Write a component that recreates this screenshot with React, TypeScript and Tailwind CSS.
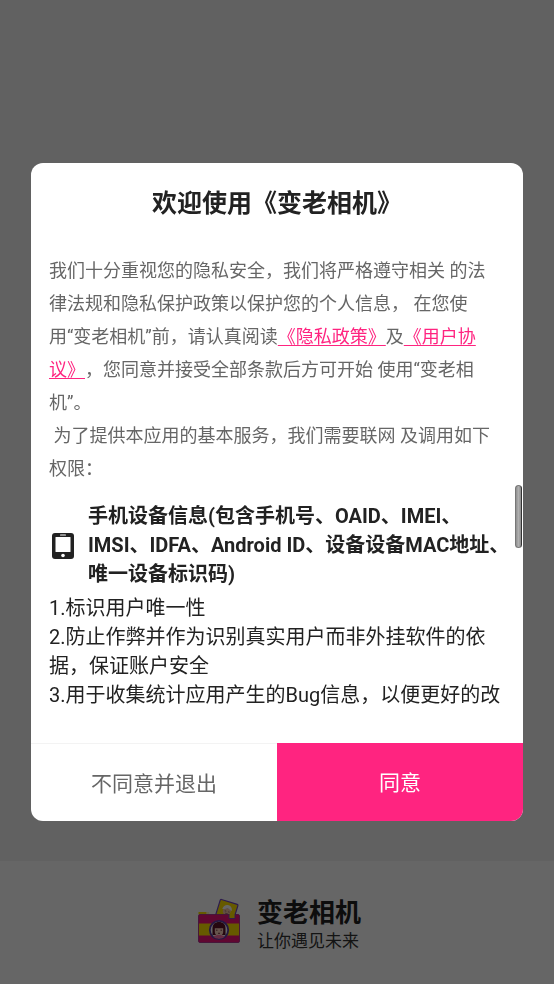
import { useState } from 'react';

const PURPOSES = [
  '1.标识用户唯一性',
  '2.防止作弊并作为识别真实用户而非外挂软件的依据，保证账户安全',
  '3.用于收集统计应用产生的Bug信息，以便更好的改',
];

function DeviceIcon() {
  return (
    <svg width="22" height="26" viewBox="0 0 22 26" className="shrink-0" aria-hidden="true">
      <rect width="22" height="26" rx="3" fill="#222" />
      <rect x="3.5" y="4" width="15" height="15" rx="0.5" fill="#fff" />
      <rect x="8" y="1.6" width="6" height="1" rx="0.5" fill="#fff" />
      <circle cx="11" cy="22.5" r="1.8" fill="#fff" />
    </svg>
  );
}

function CameraLogo() {
  return (
    <svg width="44" height="46" viewBox="0 0 44 46" className="shrink-0" aria-hidden="true">
      {/* photo coming out of the camera */}
      <g transform="rotate(17 23.5 2.2)">
        <rect x="23.5" y="2.2" width="18.5" height="22" rx="1" fill="#ffe100" stroke="#6f45c4" strokeWidth="1.2" />
        <circle cx="33" cy="11.5" r="4" fill="#f6c6a8" />
        <path d="M28 11c0-4 2.500-5.500 5-5.500s4.700 2 4.700 4.800c-2-.3-3-1.600-4.700-1.800-1.500 1-3 2.300-5 2.500z" fill="#fff" />
        <path d="M31 12h1.500M34.500 12H36M32 14.200h3" stroke="#99606a" strokeWidth="0.8" />
        <path d="M28.500 18c2-3.200 7-3.200 9 0z" fill="#f4ecff" />
      </g>
      {/* flash */}
      <rect x="1.500" y="15" width="8" height="2.500" fill="#ffe100" />
      <rect x="10" y="15" width="2.200" height="2.500" fill="#fff7b8" />
      {/* body */}
      <rect x="1.500" y="17.500" width="41" height="28" rx="1.500" fill="#f0137b" />
      <rect x="1.500" y="26.500" width="41" height="12" fill="#ffe100" />
      <rect x="1.500" y="17.500" width="41" height="28" rx="1.500" fill="none" stroke="#a8308f" strokeWidth="0.9" />
      <path d="M32 17v4.500h6V17z" fill="#ffe100" />
      <path d="M32 17v4.500h6V17" fill="none" stroke="#6f45c4" strokeWidth="0.9" />
      {/* lens */}
      <circle cx="22" cy="33" r="9.200" fill="#fff" stroke="#5a3ca8" strokeWidth="1.800" />
      <path d="M15.500 38v-6.500c0-4.500 2.800-6.500 6.500-6.500s6.500 2 6.500 6.500V38z" fill="#5c1226" />
      <path d="M17.800 31.200h8.400V35a4.200 4.200 0 0 1-8.400 0z" fill="#ffd2bd" />
      <path d="M19 33.200h1.500M23.500 33.200H25M21 36.300h2" stroke="#5c1226" strokeWidth="0.800" />
      <path d="M16 39.800c2.500-2.300 9.500-2.300 12 0-3 2.600-9 2.600-12 0z" fill="#ff6fa5" />
    </svg>
  );
}

function SplashPage() {
  return (
    <div className="min-h-screen flex flex-col bg-[#f3f3f3]">
      <div className="flex-1" />
      <footer className="flex items-start justify-center gap-4 bg-white pl-1 pt-9 pb-[31px]">
        <CameraLogo />
        <div>
          <h1 className="text-[26px] leading-8 font-bold text-[#222]">变老相机</h1>
          <p className="text-[17px] leading-6 text-[#333]">让你遇见未来</p>
        </div>
      </footer>
    </div>
  );
}

interface ConsentDialogProps {
  onAgree: () => void;
  onDecline: () => void;
}

function ConsentDialog({ onAgree, onDecline }: ConsentDialogProps) {
  return (
    <div className="fixed inset-0 bg-black/60 flex items-center justify-center px-[31px]">
      <div
        role="dialog"
        aria-modal="true"
        aria-labelledby="consent-title"
        className="relative w-full bg-white rounded-xl overflow-hidden"
      >
        <h2
          id="consent-title"
          className="pt-[23px] pb-8 text-center text-[25px] leading-9 font-bold text-[#222]"
        >
          欢迎使用《变老相机》
        </h2>

        <div className="max-h-[456px] overflow-y-auto [scrollbar-width:none]">
          <div className="pl-[18px] pr-6 text-[18px] leading-[33px] text-[#666]">
            <p>
              我们十分重视您的隐私安全，我们将严格遵守相关 的法律法规和隐私保护政策以保护您的个人信息， 在您使
              <span className="whitespace-nowrap">用“变老相机”</span>
              前，请认真阅读
              <a href="#privacy" className="text-[#ff2480] underline underline-offset-2">《隐私政策》</a>及
              <a href="#terms" className="text-[#ff2480] underline underline-offset-2">《用户协议》</a>
              ，您同意并接受全部条款后方可开始 使用“变老相机”。
            </p>
            <p>&nbsp;为了提供本应用的基本服务，我们需要联网 及调用如下权限：</p>
          </div>

          {/* Permission */}
          <div className="mt-[17px] pl-[21px] pr-3 flex items-center gap-[14px]">
            <DeviceIcon />
            <h3 className="text-[20px] leading-[29px] font-bold text-[#222]">
              手机设备信息(包含手机号、OAID、IMEI、IMSI、IDFA、Android ID、设备设备MAC地址、唯一设备标识码)
            </h3>
          </div>
          <ol className="mt-[5px] pl-[18px] pr-4 text-[20px] leading-[29px] text-[#222]">
            {PURPOSES.map((item) => (
              <li key={item}>{item}</li>
            ))}
          </ol>
        </div>

        {/* Scroll thumb */}
        <div className="absolute top-[322px] right-px w-[7px] h-[63px] rounded-full border border-[#777] border-r-[#333] bg-linear-to-r from-[#8f8f8f] via-[#b0b0b0] to-[#8c8c8c]" />

        <div className="mt-[33px] grid grid-cols-2 h-[78px] text-[21px]">
          <button
            type="button"
            onClick={onDecline}
            className="border-t border-[#f3f3f3] pt-1 text-[#666]"
          >
            不同意并退出
          </button>
          <button type="button" onClick={onAgree} className="bg-[#ff2480] pt-1 text-white">
            同意
          </button>
        </div>
      </div>
    </div>
  );
}

export default function App() {
  const [open, setOpen] = useState(true);

  return (
    <div
      lang="zh-CN"
      className="font-[Roboto,'Noto_Sans_CJK_SC',sans-serif] [text-spacing-trim:space-all]"
    >
      <SplashPage />
      {open && (
        <ConsentDialog onAgree={() => setOpen(false)} onDecline={() => window.close()} />
      )}
    </div>
  );
}
